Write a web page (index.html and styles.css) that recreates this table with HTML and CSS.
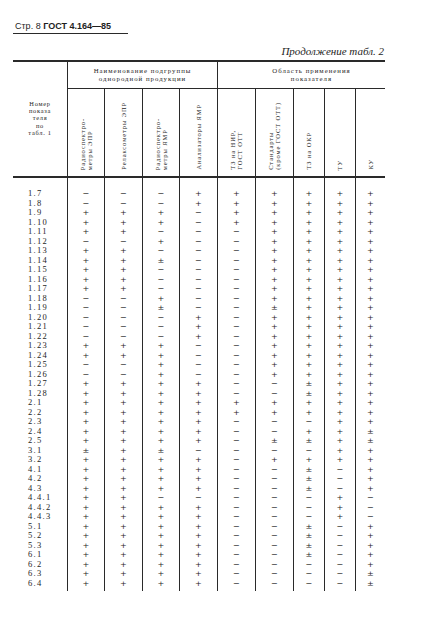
FILE: index.html
```html
<!DOCTYPE html>
<html lang="ru">
<head>
<meta charset="utf-8">
<title>ГОСТ 4.164—85, стр. 8</title>
<link rel="stylesheet" href="styles.css">
</head>
<body>
<div class="page">
  <div class="runhead"><span>Стр. 8</span> <b>ГОСТ 4.164—85</b></div>
  <div class="cont">Продолжение табл. 2</div>

  <div class="table">
    <div class="thead">
      <div class="h-num">Номер<br>показа<br>теля<br>по<br>табл. 1</div>
      <div class="h-group h-g1">Наименование подгруппы<br>однородной продукции</div>
      <div class="h-group h-g2">Область применения<br>показателя</div>
      <div class="h-v"><span class="vt">Радиоспектро-<br>метры ЭПР</span></div>
      <div class="h-v"><span class="vt">Релаксометры ЭПР</span></div>
      <div class="h-v"><span class="vt">Радиоспектро-<br>метры ЯМР</span></div>
      <div class="h-v h-sep"><span class="vt">Анализаторы ЯМР</span></div>
      <div class="h-v"><span class="vt">ТЗ на НИР,<br>ГОСТ ОТТ</span></div>
      <div class="h-v"><span class="vt">Стандарты<br>(кроме ГОСТ ОТТ)</span></div>
      <div class="h-v"><span class="vt">ТЗ на ОКР</span></div>
      <div class="h-v"><span class="vt">ТУ</span></div>
      <div class="h-v h-last"><span class="vt">КУ</span></div>
    </div>

    <div class="tbody">
      <div class="col col-num">1.7<br>1.8<br>1.9<br>1.10<br>1.11<br>1.12<br>1.13<br>1.14<br>1.15<br>1.16<br>1.17<br>1.18<br>1.19<br>1.20<br>1.21<br>1.22<br>1.23<br>1.24<br>1.25<br>1.26<br>1.27<br>1.28<br>2.1<br>2.2<br>2.3<br>2.4<br>2.5<br>3.1<br>3.2<br>4.1<br>4.2<br>4.3<br>4.4.1<br>4.4.2<br>4.4.3<br>5.1<br>5.2<br>5.3<br>6.1<br>6.2<br>6.3<br>6.4</div>
      <div class="col sym w37">−<br>−<br>+<br>+<br>+<br>−<br>+<br>+<br>+<br>+<br>+<br>−<br>−<br>−<br>−<br>−<br>+<br>+<br>−<br>−<br>+<br>+<br>+<br>+<br>+<br>+<br>+<br>±<br>+<br>+<br>+<br>+<br>+<br>+<br>+<br>+<br>+<br>+<br>+<br>+<br>+<br>+</div>
      <div class="col sym w38">−<br>−<br>+<br>+<br>+<br>−<br>+<br>+<br>+<br>+<br>+<br>−<br>−<br>−<br>−<br>−<br>+<br>+<br>−<br>−<br>+<br>+<br>+<br>+<br>+<br>+<br>+<br>+<br>+<br>+<br>+<br>+<br>+<br>+<br>+<br>+<br>+<br>+<br>+<br>+<br>+<br>+</div>
      <div class="col sym w37">−<br>−<br>+<br>+<br>−<br>+<br>−<br>±<br>−<br>−<br>−<br>+<br>±<br>−<br>−<br>−<br>+<br>+<br>+<br>+<br>+<br>+<br>+<br>+<br>+<br>+<br>+<br>±<br>+<br>+<br>+<br>+<br>−<br>+<br>+<br>+<br>+<br>+<br>+<br>+<br>+<br>+</div>
      <div class="col sym w38">+<br>+<br>−<br>−<br>−<br>−<br>−<br>−<br>−<br>−<br>−<br>−<br>−<br>+<br>+<br>+<br>−<br>−<br>−<br>−<br>+<br>+<br>+<br>+<br>+<br>+<br>+<br>−<br>+<br>+<br>+<br>+<br>−<br>+<br>+<br>+<br>+<br>+<br>+<br>+<br>+<br>+</div>
      <div class="col sym w38">+<br>+<br>+<br>+<br>−<br>−<br>−<br>−<br>−<br>−<br>−<br>−<br>−<br>−<br>−<br>−<br>−<br>−<br>−<br>−<br>−<br>−<br>+<br>+<br>−<br>−<br>−<br>−<br>−<br>−<br>−<br>−<br>−<br>−<br>−<br>−<br>−<br>−<br>−<br>−<br>−<br>−</div>
      <div class="col sym w38">+<br>+<br>+<br>+<br>+<br>+<br>+<br>+<br>+<br>+<br>+<br>+<br>±<br>+<br>+<br>+<br>+<br>+<br>+<br>+<br>−<br>−<br>+<br>+<br>−<br>−<br>±<br>−<br>+<br>−<br>−<br>−<br>−<br>−<br>−<br>−<br>−<br>−<br>−<br>−<br>−<br>−</div>
      <div class="col sym w31">+<br>+<br>+<br>+<br>+<br>+<br>+<br>+<br>+<br>+<br>+<br>+<br>+<br>+<br>+<br>+<br>+<br>+<br>+<br>+<br>±<br>±<br>+<br>+<br>−<br>+<br>±<br>−<br>+<br>±<br>±<br>±<br>−<br>−<br>−<br>±<br>±<br>±<br>±<br>−<br>−<br>−</div>
      <div class="col sym w31">+<br>+<br>+<br>+<br>+<br>+<br>+<br>+<br>+<br>+<br>+<br>+<br>+<br>+<br>+<br>+<br>+<br>+<br>+<br>+<br>+<br>+<br>+<br>+<br>+<br>+<br>+<br>+<br>+<br>−<br>−<br>−<br>+<br>+<br>+<br>−<br>−<br>−<br>−<br>−<br>−<br>−</div>
      <div class="col sym w29 last">+<br>+<br>+<br>+<br>+<br>+<br>+<br>+<br>+<br>+<br>+<br>+<br>+<br>+<br>+<br>+<br>+<br>+<br>+<br>+<br>+<br>+<br>+<br>+<br>+<br>±<br>±<br>+<br>+<br>+<br>+<br>+<br>−<br>−<br>−<br>+<br>+<br>+<br>+<br>+<br>±<br>±</div>
    </div>
  </div>
</div>
</body>
</html>
```

FILE: styles.css
```css
html, body {
  margin: 0;
  padding: 0;
  background: #ffffff;
}

body {
  font-family: "Liberation Serif", "Times New Roman", serif;
  color: #1e1e1e;
}

.page {
  padding: 21px 0 0 13px;
  width: 372px;
}

.runhead {
  font-family: "Liberation Sans", Arial, sans-serif;
  font-size: 9px;
  line-height: 10px;
  width: 113px;
  padding: 0 0 2px 2px;
  border-bottom: 1.5px solid #2a2a2a;
  white-space: nowrap;
}

.runhead b {
  font-weight: bold;
}

.cont {
  margin-top: 11px;
  font-style: italic;
  font-size: 11px;
  line-height: 13px;
  text-align: right;
  padding-right: 1px;
}

.table {
  margin-top: 2px;
  width: 372px;
  border-top: 2px solid #2a2a2a;
}

.thead {
  display: grid;
  grid-template-columns: 55px 37px 38px 37px 38px 38px 38px 31px 31px 29px;
  grid-template-rows: 27px 87px;
  border-bottom: 2px solid #2a2a2a;
}

.thead > div {
  box-sizing: border-box;
}

.h-num {
  grid-row: 1 / 3;
  grid-column: 1;
  border-right: 1px solid #2a2a2a;
  display: flex;
  align-items: center;
  justify-content: center;
  text-align: center;
  font-size: 6.4px;
  line-height: 7.2px;
  letter-spacing: 0.7px;
  padding-bottom: 2px;
}

.h-group {
  border-bottom: 1px solid #2a2a2a;
  text-align: center;
  font-size: 6.8px;
  line-height: 7.7px;
  letter-spacing: 1px;
  padding-top: 5px;
  white-space: nowrap;
}

.h-g1 {
  grid-row: 1;
  grid-column: 2 / 6;
  border-right: 1px solid #2a2a2a;
}

.h-g2 {
  grid-row: 1;
  grid-column: 6 / 11;
  padding-left: 20px;
}

.h-v {
  grid-row: 2;
  border-right: 1px solid #2a2a2a;
  display: flex;
  justify-content: center;
  align-items: flex-end;
  padding-bottom: 6px;
}

.h-last {
  border-right: none;
}

.vt {
  writing-mode: vertical-rl;
  transform: rotate(180deg);
  font-size: 6.5px;
  line-height: 7.3px;
  letter-spacing: 0.9px;
  white-space: nowrap;
}

.tbody {
  display: flex;
}

.col {
  box-sizing: border-box;
  border-right: 1px solid #2a2a2a;
  padding: 11px 0 3px;
  text-align: center;
  line-height: 9.5px;
}

.sym {
  font-family: "DejaVu Serif", "Liberation Serif", serif;
  font-size: 8.1px;
}

.col-num {
  width: 55px;
  text-align: left;
  padding-left: 15px;
  font-size: 8.5px;
  letter-spacing: 1.3px;
}

.w37 { width: 37px; }
.w38 { width: 38px; }
.w31 { width: 31px; }
.w29 { width: 29px; }

.last {
  border-right: none;
}
```
